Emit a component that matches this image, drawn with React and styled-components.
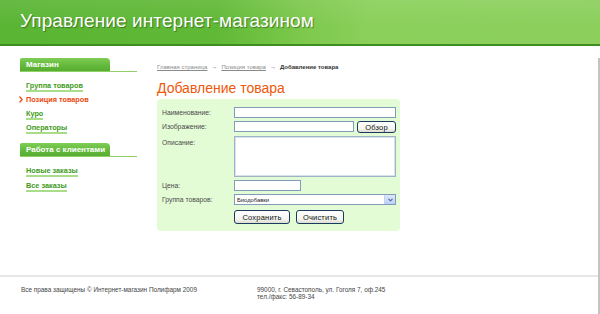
import React from 'react';
import styled, { createGlobalStyle } from 'styled-components';

const GlobalStyle = createGlobalStyle`
  html, body {
    margin: 0;
    padding: 0;
    background: #fff;
  }
  body {
    font-family: "Liberation Sans", Arial, sans-serif;
  }
`;

const Page = styled.div`
  width: 600px;
  height: 314px;
  overflow: hidden;
  display: flex;
  flex-direction: column;
`;

const Header = styled.header`
  height: 46px;
  flex-shrink: 0;
  border-bottom: 2px solid #3f8c20;
  background:
    linear-gradient(180deg, rgba(255,255,255,0.08) 0%, rgba(255,255,255,0) 60%),
    linear-gradient(90deg, #5ab534 0%, #60b936 36%, #7cc84c 50%, #8bd05b 62%, #8ccf5d 100%);
  display: flex;
  align-items: center;
  padding-left: 20px;
  box-sizing: border-box;
`;

const Title = styled.h1`
  margin: 0 0 2px;
  font-size: 19px;
  font-weight: normal;
  color: #fff;
  text-shadow: 1px 1px 1px rgba(30, 70, 10, 0.55);
  letter-spacing: 0.1px;
`;

const Frame = styled.div`
  flex: 1;
  margin-top: 12px;
  border-right: 2px solid #c4c4c4;
  display: flex;
  flex-direction: column;
`;

const Body = styled.div`
  height: 217px;
  display: flex;
`;

const Sidebar = styled.aside`
  width: 117px;
  margin-left: 20px;
  flex-shrink: 0;
`;

const Section = styled.div`
  margin-bottom: 11px;
`;

const SectionHead = styled.div`
  border-bottom: 1px solid #8fd067;
  height: 13px;
  display: flex;
`;

const Tab = styled.div`
  width: 90px;
  height: 13px;
  box-sizing: border-box;
  padding-left: 6px;
  border-radius: 2px 4px 0 0;
  background: linear-gradient(180deg, #7fcd56 0%, #62b83a 60%, #56ad30 100%);
  color: #fff;
  font-weight: bold;
  font-size: 8px;
  line-height: 13px;
  white-space: nowrap;
`;

const LinkList = styled.ul`
  list-style: none;
  margin: 0;
  padding: 9px 0 0 6px;
  display: flex;
  flex-direction: column;
  gap: ${({ spacing }) => spacing}px;
`;

const Item = styled.li`
  position: relative;
  height: 9px;
  font-size: 7.3px;
  font-weight: bold;
  line-height: 9px;
  white-space: nowrap;
`;

const NavLink = styled.a`
  color: ${({ active }) => (active ? '#ec4a0e' : '#3e9b1b')};
  text-decoration: none;
  border-bottom: ${({ active }) => (active ? 'none' : '2px solid #a9dd8a')};
`;

const Chevron = styled.svg`
  position: absolute;
  left: -7px;
  top: 1px;
`;

const Main = styled.main`
  margin-left: 20px;
  width: 243px;
`;

const Crumbs = styled.div`
  font-size: 6px;
  color: #8a8a8a;
  height: 11px;
  line-height: 11px;
  margin-top: 4px;
  white-space: nowrap;
`;

const Crumb = styled.a`
  color: #8a8a8a;
  text-decoration: underline;
`;

const Arrow = styled.span`
  margin: 0 4px;
  color: #555;
`;

const Current = styled.span`
  color: #333;
  font-weight: bold;
`;

const PageTitle = styled.h2`
  margin: 6px 0 0;
  font-size: 14px;
  font-weight: normal;
  color: #ef580b;
  height: 20px;
  line-height: 18px;
`;

const Panel = styled.form`
  background: #e4fcd6;
  border-radius: 4px;
  padding: 8px 4px 7px 5px;
  display: grid;
  grid-template-columns: 72px 162px;
  row-gap: 3px;
  align-items: start;
`;

const Label = styled.label`
  font-size: 6.8px;
  color: #4a4a4a;
  line-height: ${({ h }) => h || 11}px;
  white-space: nowrap;
`;

const Input = styled.input`
  box-sizing: border-box;
  width: ${({ w }) => w || 162}px;
  height: 11px;
  margin: 0;
  padding: 0 2px;
  border: 1px solid #7f9db9;
  background: #fff;
  font-size: 6px;
  outline: none;
`;

const FieldRow = styled.div`
  display: flex;
  gap: 3px;
  align-items: flex-start;
`;

const TextArea = styled.textarea`
  box-sizing: border-box;
  width: 162px;
  height: 41px;
  margin: 0;
  border: 1px solid #9fb3c6;
  box-shadow: inset 0 0 0 1px #d6e2ec;
  background: #fff;
  resize: none;
  outline: none;
`;

const Select = styled.div`
  box-sizing: border-box;
  width: 162px;
  height: 11px;
  border: 1px solid #7f9db9;
  background: #fff;
  display: flex;
  align-items: center;
  justify-content: space-between;
  padding-left: 2px;
  font-size: 5.8px;
  color: #222;
`;

const SelectArrow = styled.div`
  width: 10px;
  height: 9px;
  background: linear-gradient(180deg, #dde8fd 0%, #bccff6 100%);
  border-left: 1px solid #c5d3f1;
  display: flex;
  align-items: center;
  justify-content: center;
`;

const Button = styled.button`
  box-sizing: border-box;
  width: ${({ w }) => w}px;
  height: ${({ h }) => h || 14}px;
  margin: 0;
  padding: 0;
  border: 1px solid #1c3a5e;
  border-radius: 3px;
  background: linear-gradient(180deg, #ffffff 0%, #f4f4ef 70%, #dcdcd2 100%);
  font-family: "Liberation Sans", Arial, sans-serif;
  font-size: 7.5px;
  color: #111;
  letter-spacing: 0.2px;
`;

const Buttons = styled.div`
  display: flex;
  gap: 6px;
  margin-top: 2px;
`;

const Footer = styled.footer`
  flex: 1;
  border-top: 2px solid #e6e6e6;
  display: flex;
  padding: 9px 0 0 21px;
  font-size: 6.4px;
  color: #444;
  line-height: 7px;
`;

const FooterCol = styled.div`
  width: ${({ w }) => w}px;
`;

const sections = [
  {
    title: 'Магазин',
    spacing: 5,
    links: ['Группа товаров', 'Позиция товаров', 'Куро', 'Операторы'],
  },
  {
    title: 'Работа с клиентами',
    spacing: 6,
    links: ['Новые заказы', 'Все заказы'],
  },
];

const ACTIVE = 'Позиция товаров';

const App = () => (
  <Page>
    <GlobalStyle />
    <Header>
      <Title>Управление интернет-магазином</Title>
    </Header>
    <Frame>
      <Body>
        <Sidebar>
          {sections.map((s) => (
            <Section key={s.title}>
              <SectionHead>
                <Tab>{s.title}</Tab>
              </SectionHead>
              <LinkList spacing={s.spacing}>
                {s.links.map((l) => (
                  <Item key={l}>
                    {l === ACTIVE && (
                      <Chevron width="4" height="7" viewBox="0 0 4 7">
                        <path d="M0.5 0.5 L3.2 3.5 L0.5 6.5" fill="none" stroke="#ec4a0e" strokeWidth="1.2" />
                      </Chevron>
                    )}
                    <NavLink href="#" active={l === ACTIVE ? 1 : 0}>{l}</NavLink>
                  </Item>
                ))}
              </LinkList>
            </Section>
          ))}
        </Sidebar>
        <Main>
          <Crumbs>
            <Crumb href="#">Главная страница</Crumb>
            <Arrow>→</Arrow>
            <Crumb href="#">Позиция товара</Crumb>
            <Arrow>→</Arrow>
            <Current>Добавление товара</Current>
          </Crumbs>
          <PageTitle>Добавление товара</PageTitle>
          <Panel onSubmit={(e) => e.preventDefault()}>
            <Label>Наименование:</Label>
            <Input />
            <Label>Изображение:</Label>
            <FieldRow>
              <Input w={120} />
              <Button type="button" w={39} h={12}>Обзор</Button>
            </FieldRow>
            <Label h={13}>Описание:</Label>
            <TextArea />
            <Label>Цена:</Label>
            <Input w={67} />
            <Label>Группа товаров:</Label>
            <Select>
              Биодобавки
              <SelectArrow>
                <svg width="5" height="4" viewBox="0 0 5 4">
                  <path d="M0.5 0.8 L2.5 2.8 L4.5 0.8" fill="none" stroke="#4d6185" strokeWidth="1.1" />
                </svg>
              </SelectArrow>
            </Select>
            <span />
            <Buttons>
              <Button type="submit" w={56}>Сохранить</Button>
              <Button type="reset" w={48}>Очистить</Button>
            </Buttons>
          </Panel>
        </Main>
      </Body>
      <Footer>
        <FooterCol w={236}>Все права защищены © Интернет-магазин Полифарм 2009</FooterCol>
        <FooterCol w={200}>
          99000, г. Севастополь, ул. Гоголя 7, оф.245
          <br />
          тел./факс: 56-89-34
        </FooterCol>
      </Footer>
    </Frame>
  </Page>
);

export default App;
